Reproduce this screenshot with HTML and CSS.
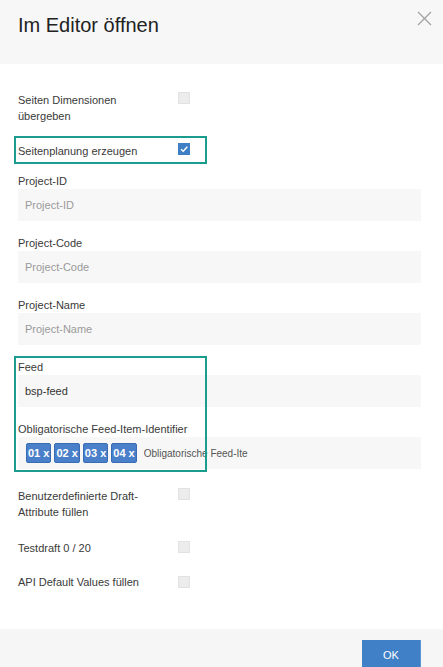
FILE: index.html
```html
<!DOCTYPE html>
<html lang="de">
<head>
    <meta charset="UTF-8">
    <meta name="viewport" content="width=device-width, initial-scale=1.0">
    <title>Im Editor öffnen</title>
    <link rel="stylesheet" href="styles.css">
</head>
<body>
    <div class="modal">
        <div class="modal-header">
            <h1>Im Editor öffnen</h1>
            <svg class="close" width="15" height="15" viewBox="0 0 15 15">
                <path d="M1 1L14 14M14 1L1 14" stroke="#a0a0a0" stroke-width="1.2" fill="none"/>
            </svg>
        </div>
        <form class="modal-body">
            <div class="check-row first">
                <label>Seiten Dimensionen<br>übergeben</label>
                <span class="checkbox"></span>
            </div>
            <div class="check-row planning marked">
                <label>Seitenplanung erzeugen</label>
                <span class="checkbox checked">
                    <svg width="12" height="12" viewBox="0 0 12 12">
                        <path d="M3 6.2L5.2 8.3L9.3 3.8" stroke="#fff" stroke-width="1.4" fill="none"/>
                    </svg>
                </span>
            </div>
            <div class="field">
                <label for="project_id">Project-ID</label>
                <input type="text" id="project_id" placeholder="Project-ID">
            </div>
            <div class="field">
                <label for="project_code">Project-Code</label>
                <input type="text" id="project_code" placeholder="Project-Code">
            </div>
            <div class="field">
                <label for="project_name">Project-Name</label>
                <input type="text" id="project_name" placeholder="Project-Name">
            </div>
            <div class="feed-group marked">
                <div class="field">
                    <label for="feed">Feed</label>
                    <input type="text" id="feed" value="bsp-feed">
                </div>
                <div class="field">
                    <label>Obligatorische Feed-Item-Identifier</label>
                    <div class="tag-input">
                        <span class="tag">01 x</span>
                        <span class="tag">02 x</span>
                        <span class="tag">03 x</span>
                        <span class="tag">04 x</span>
                        <span class="tag-placeholder">Obligatorische Feed-Ite</span>
                    </div>
                </div>
            </div>
            <div class="check-row draft">
                <label>Benutzerdefinierte Draft-<br>Attribute füllen</label>
                <span class="checkbox"></span>
            </div>
            <div class="check-row testdraft">
                <label>Testdraft 0 / 20</label>
                <span class="checkbox"></span>
            </div>
            <div class="check-row defaults">
                <label>API Default Values füllen</label>
                <span class="checkbox low"></span>
            </div>
        </form>
        <div class="modal-footer">
            <button type="button" class="btn-ok">OK</button>
        </div>
    </div>
</body>
</html>
```

FILE: styles.css
```css
body {
    font-family: "Liberation Sans", Arial, sans-serif;
    margin: 0;
    padding: 0;
    background-color: #fff;
    color: #3a3a3a;
}
.modal-header {
    display: flex;
    justify-content: space-between;
    align-items: flex-start;
    height: 64px;
    padding: 0 11px 0 18px;
    background-color: #f7f7f7;
}
.modal-header h1 {
    margin: 13px 0 0;
    font-size: 20px;
    line-height: 24px;
    font-weight: normal;
    color: #222;
}
.close {
    margin-top: 11px;
}
.modal-body {
    padding: 28px 22px 39px 18px;
}
label {
    display: block;
    font-size: 11px;
    line-height: 16px;
}
.check-row {
    display: flex;
    align-items: flex-start;
}
.check-row label {
    width: 160px;
}
.planning { margin-top: 19px; }
.draft { margin-top: 19px; }
.testdraft { margin-top: 20px; }
.defaults { margin-top: 18px; }
.checkbox {
    width: 12px;
    height: 12px;
    box-sizing: border-box;
    background-color: #ececec;
    border: 1px solid #e2e2e2;
}
.testdraft .checkbox { margin-top: 1px; }
.checkbox.low { margin-top: 2px; }
.checkbox.checked {
    background-color: #3f7fc6;
    border-color: #3f7fc6;
    display: flex;
    align-items: center;
    justify-content: center;
}
.checkbox.checked svg {
    flex: none;
}
.field {
    margin-top: 14px;
}
.field input[type="text"],
.tag-input {
    display: block;
    width: 100%;
    height: 32px;
    box-sizing: border-box;
    border: none;
    padding: 0 7px;
    background-color: #f7f7f7;
    font-family: inherit;
    font-size: 11px;
    color: #333;
    outline: none;
}
.field input::placeholder {
    color: #9a9a9a;
}
.tag-input {
    display: flex;
    align-items: center;
    gap: 3px;
    padding: 0 8px;
}
.tag {
    height: 20px;
    box-sizing: border-box;
    padding: 0 1px;
    line-height: 18px;
    font-size: 11px;
    font-weight: bold;
    color: #fff;
    background-color: #4a80c9;
    border: 1px solid #3a6cb3;
    border-radius: 2px;
}
.tag-placeholder {
    margin-left: 4px;
    font-size: 10px;
    color: #555;
}
.marked {
    position: relative;
}
.marked::after {
    content: "";
    position: absolute;
    left: -4px;
    width: 189px;
    border: 2px solid #1a9c8f;
    pointer-events: none;
}
.planning.marked::after {
    top: -7px;
    bottom: -5px;
}
.feed-group.marked::after {
    top: -3px;
    bottom: -3px;
}
.modal-footer {
    display: flex;
    justify-content: flex-end;
    padding: 11px 22px 11px 18px;
    background-color: #f6f6f6;
}
.btn-ok {
    width: 59px;
    height: 30px;
    border: none;
    border-right: 1px solid #5a94d2;
    background-color: #3f80c6;
    color: #fff;
    font-family: inherit;
    font-size: 11px;
    padding: 0;
}
```
